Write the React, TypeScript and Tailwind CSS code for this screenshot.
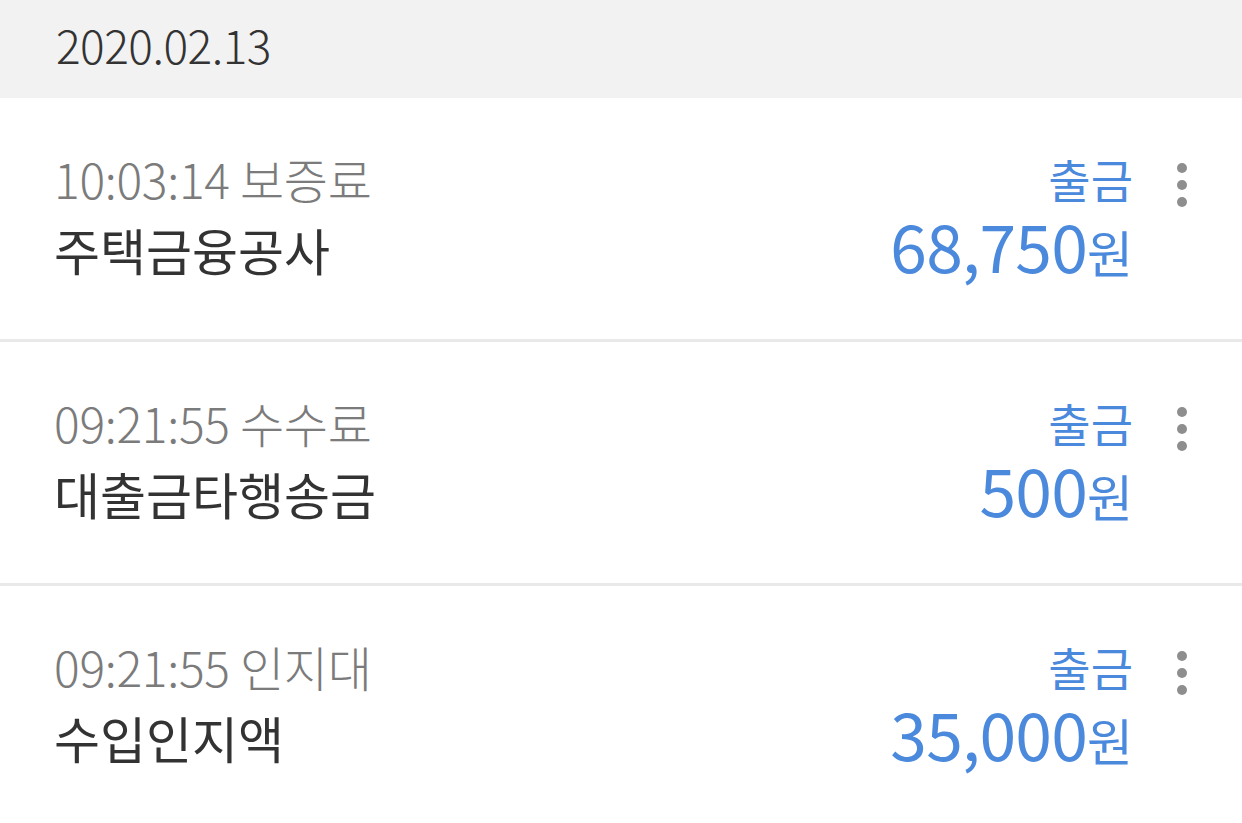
import React from "react";

const font = { fontFamily: '"Noto Sans CJK KR", "Noto Sans", sans-serif' };

type Item = { time: string; cat: string; name: string; amount: string };

const items: Item[] = [
  { time: "10:03:14", cat: "보증료", name: "주택금융공사", amount: "68,750" },
  { time: "09:21:55", cat: "수수료", name: "대출금타행송금", amount: "500" },
  { time: "09:21:55", cat: "인지대", name: "수입인지액", amount: "35,000" },
];

function Dots() {
  return (
    <div className="flex flex-col items-center gap-[7px] pt-[2px]">
      <span className="block w-[10px] h-[10px] rounded-full bg-[#8e8e8e]" />
      <span className="block w-[10px] h-[10px] rounded-full bg-[#8e8e8e]" />
      <span className="block w-[10px] h-[10px] rounded-full bg-[#8e8e8e]" />
    </div>
  );
}

function Row({ item, last }: { item: Item; last?: boolean }) {
  return (
    <div
      className={`flex h-[244px] pt-[56px] pl-[54px] pr-[55px] ${
        last ? "" : "border-b-[3px] border-[#e9e9e9]"
      }`}
    >
      <div className="flex-1 flex flex-col">
        <div className="text-[48px] font-light leading-none text-[#7b7b7b] tracking-[-0.3px]">
          {item.time} {item.cat}
        </div>
        <div className="mt-[22px] text-[50px] leading-none text-[#333333]">
          {item.name}
        </div>
      </div>
      <div className="flex flex-col items-end">
        <div className="text-[46px] leading-[48px] text-[#4a89dc]">출금</div>
        <div className="mt-[12px] flex items-baseline text-[#4a89dc] leading-[60px]">
          <span className="text-[66px] tracking-[-0.8px]">{item.amount}</span>
          <span className="text-[50px]">원</span>
        </div>
      </div>
      <div className="ml-[44px] pt-[7px]">
        <Dots />
      </div>
    </div>
  );
}

export default function App() {
  return (
    <div className="w-[1242px] h-[823px] bg-white overflow-hidden" style={font}>
      <div className="h-[98px] bg-[#f2f2f2] pl-[56px] pt-[21px]">
        <div className="text-[46px] font-light leading-none text-[#333333] tracking-[-0.5px]">2020.02.13</div>
      </div>
      {items.map((it, i) => (
        <Row key={i} item={it} last={i === items.length - 1} />
      ))}
    </div>
  );
}
